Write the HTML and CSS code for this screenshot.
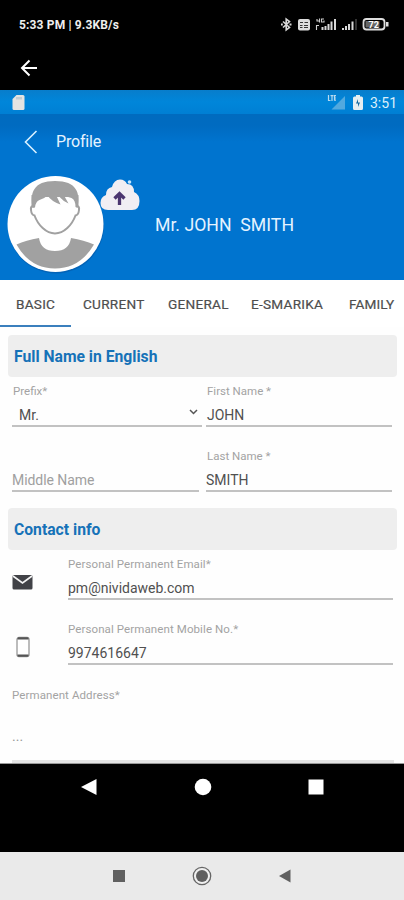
FILE: index.html
```html
<!DOCTYPE html>
<html lang="en">
<head>
<meta charset="utf-8">
<title>Profile</title>
<link rel="stylesheet" href="styles.css">
</head>
<body>
<div class="phone">
  <div class="status">
    <span class="status-text">5:33 PM | 9.3KB/s</span>
    <svg class="status-icons" width="112" height="16" viewBox="280 17 112 16">
      <path d="M283 21.500l6.500 6-3.300 2.500v-11l3.300 2.500-6.500 6" fill="none" stroke="#d8d8d8" stroke-width="1.600"/>
      <path d="M281 24.500h1.800M289.500 24.500h2" stroke="#d8d8d8" stroke-width="1.800"/>
      <rect x="298" y="19" width="12" height="11.500" rx="2" fill="#dcdcdc"/>
      <path d="M300 22.500h3M304.500 22.500h3.500M300 25.500h2.500M304 25.500h4M300 27.500h2.500M304 27.500h4" stroke="#333" stroke-width="1"/>
      <path d="M317 19v2h3M319.500 18.500v4M324 19h-2.500v3h2.500v-1.500M316.500 30v-4.500h2.500" fill="none" stroke="#ccc" stroke-width="1.100"/>
      <path d="M322.500 30v-3M325.500 30v-4M328.500 30v-6M331.500 30v-8.500M335 30v-11" stroke="#d8d8d8" stroke-width="2"/>
      <path d="M343 30v-2M346 30v-4M349 30v-6M352.500 30v-8.500" stroke="#d8d8d8" stroke-width="2"/>
      <path d="M356 30v-11" stroke="#333" stroke-width="2"/>
      <rect x="363.500" y="19" width="21" height="10.500" rx="3" fill="none" stroke="#dedede" stroke-width="1.800"/>
      <rect x="365.500" y="21" width="14" height="6.500" fill="#666"/>
      <path d="M386 22h2.500v4.500h-2.500z" fill="#dedede"/>
      <text x="368.500" y="28" class="battery-text">72</text>
    </svg>
  </div>
  <div class="topbar">
    <svg width="18" height="18" viewBox="0 0 18 18"><path d="M9.500 1.500L2 9l7.500 7.500M2 9h15" fill="none" stroke="#fff" stroke-width="2"/></svg>
  </div>
  <div class="inner-status">
    <svg class="sd" width="13" height="15" viewBox="0 0 13 15"><path d="M4.500 0H11q1.500 0 1.500 1.500v12q0 1.500-1.500 1.500H2Q.5 15 .5 13.500V4z" fill="#e4e4e2"/><path d="M5 2v2.500M7 2v2.500M9 2v2.500" stroke="#9fb6c4" stroke-width="1"/></svg>
    <svg class="lte" width="18" height="15" viewBox="0 0 18 15"><path d="M18 1v13.500H4.500z" fill="#52a9df"/><path d="M1.500 0v5.500h2M3.500.7h3M5 .7v5.300M9 .7H7.500v4.500H9M7.500 3H9" fill="none" stroke="#b7d9ef" stroke-width="1.200"/></svg>
    <svg class="charge" width="10" height="15" viewBox="0 0 10 15"><path d="M3 0h4v1.500h1.500Q10 1.500 10 3v10.500Q10 15 8.500 15h-7Q0 15 0 13.500V3q0-1.500 1.500-1.500H3z" fill="#e7eef1"/><path d="M5 4L3 8.500h2V12l2-4.500H5z" fill="#16699f"/></svg>
    <span>3:51</span>
  </div>
  <header class="header">
    <div class="title">
      <svg width="14" height="24" viewBox="0 0 14 24"><path d="M12.500 1L1.500 12l11 11" fill="none" stroke="#d8f0ff" stroke-width="1.600"/></svg>
      <h1>Profile</h1>
    </div>
    <div class="identity">
      <svg class="avatar" width="100" height="102" viewBox="6 174 100 102">
        <circle cx="56" cy="225.500" r="48" fill="#0559a6" opacity=".6"/>
        <circle cx="55.500" cy="224" r="48" fill="#fff"/>
        <path d="M16.500 244.500Q26 240 39 238q2 13 16 13 14 0 16-13 13 2 23 6.500-14 24-39 24t-38.500-24z" fill="#a1a1a1"/>
        <path d="M32.500 206q-2 1-1.500 4 .5 5 3.500 5.500C38 225 46 233.500 55 233.500S72 225 75.500 215.500q3-.5 3.500-5.500.5-3-1.500-4V196H32.500z" fill="#fff" stroke="#a1a1a1" stroke-width="2"/>
        <path d="M32.500 208C30 193 33 181 55 181s25.500 12 22.500 27l-2-1q0-7-4-9-3-1-7.500-2.500l4.500 8q-5-2-10-7.500h-2l4 8.500q-9-3-13-9-3 3-8 4.500-4 1.500-4.500 7.500z" fill="#a1a1a1"/>
      </svg>
      <svg class="cloud" width="40" height="34" viewBox="100 178 40 34">
        <path d="M108 210Q100.500 210 100.500 203q0-6 5.500-8 0-7 6-8 2-7.500 8-7.500 5 0 7 4.500 7 0 7 8 5.500 2.500 5.500 9 0 9-7.500 9z" fill="#f1eef3"/>
        <circle cx="129.500" cy="182" r="1.800" fill="#c5e7ff"/>
        <path d="M119.500 205v-11M114.500 198.500l5-5 5 5" fill="none" stroke="#4b356f" stroke-width="3.300"/>
      </svg>
      <span class="name">Mr. JOHN&nbsp; SMITH</span>
    </div>
  </header>
  <nav class="tabs">
    <span class="tab basic active">BASIC</span><span class="tab current">CURRENT</span><span class="tab general">GENERAL</span><span class="tab smarika">E-SMARIKA</span><span class="tab family">FAMILY</span>
  </nav>
  <main class="content">
    <h2 class="section">Full Name in English</h2>
    <div class="names">
      <div class="field prefix"><label>Prefix*</label><div class="value select"><span>Mr.</span><svg width="9" height="6" viewBox="0 0 9 6"><path d="M1 1l3.500 3.500L8 1" fill="none" stroke="#555" stroke-width="1.500"/></svg></div></div>
      <div class="field first"><label>First Name *</label><div class="value caps">JOHN</div></div>
      <div class="field middle"><label></label><div class="value placeholder">Middle Name</div></div>
      <div class="field last"><label>Last Name *</label><div class="value caps">SMITH</div></div>
    </div>
    <h2 class="section">Contact info</h2>
    <div class="contact-row">
      <svg width="22" height="22" viewBox="0 0 22 22"><rect x=".5" y="4" width="20" height="14.500" rx="1.500" fill="#414247"/><path d="M1 5l9.500 7L20 5" fill="none" stroke="#f4f4f4" stroke-width="1.700"/></svg>
      <div class="field"><label>Personal Permanent Email*</label><div class="value">pm@nividaweb.com</div></div>
    </div>
    <div class="contact-row">
      <svg width="22" height="22" viewBox="0 0 22 22"><rect x="5" y="1.500" width="12" height="19" rx="2" fill="#fff" stroke="#999" stroke-width="1.300"/><path d="M5.500 3.500V2.200q0-1 1.200-1h8.600q1.200 0 1.200 1v1.300zM5.500 18.500h11v1q0 1.200-1.200 1.200H6.700q-1.200 0-1.200-1.200z" fill="#555"/></svg>
      <div class="field"><label>Personal Permanent Mobile No.*</label><div class="value">9974616647</div></div>
    </div>
    <div class="address"><label>Permanent Address*</label><div class="dots">...</div></div>
  </main>
  <div class="nav-inner">
    <svg width="16" height="18" viewBox="0 0 16 18"><path d="M0 9L15.500 1v16z" fill="#fff"/></svg>
    <svg width="18" height="18" viewBox="0 0 18 18"><circle cx="9" cy="9" r="8.300" fill="#fff"/></svg>
    <svg width="16" height="18" viewBox="0 0 16 18"><rect x=".5" y="1.500" width="15" height="15" fill="#fff"/></svg>
  </div>
  <div class="nav-outer">
    <svg width="14" height="20" viewBox="0 0 14 20"><rect x="1" y="4" width="12" height="12" fill="#606060"/></svg>
    <svg width="20" height="20" viewBox="0 0 20 20"><circle cx="10" cy="10" r="8.700" fill="#f0f0f0" stroke="#666" stroke-width="1.300"/><circle cx="10" cy="10" r="6" fill="#606060"/></svg>
    <svg width="14" height="20" viewBox="0 0 14 20"><path d="M1 10l11.500-6.500v13z" fill="#606060"/></svg>
  </div>
</div>
</body>
</html>
```
FILE: styles.css
```css
* { box-sizing: border-box; }
body { margin: 0; font-family: Roboto, "Liberation Sans", sans-serif; background: #000; }
svg { display: block; flex: none; }
h1, h2 { margin: 0; }
.phone { width: 404px; height: 900px; display: flex; flex-direction: column; overflow: hidden; white-space: nowrap; }
.status { height: 50px; display: flex; align-items: center; justify-content: space-between; padding: 0 12px 0 19px; color: #eee; }
.status-text { font-size: 12px; font-weight: 700; letter-spacing: .15px; }
.battery-text { font-size: 9px; font-weight: 700; fill: #fff; }
.topbar { height: 40px; padding: 9px 0 0 20px; }
.inner-status { height: 24px; display: flex; align-items: center; padding: 1px 7px 0 12px; background: linear-gradient(#087dcb, #0086da 50%, #007fd4); color: #dceffa; font-size: 14px; }
.lte { margin-left: auto; }
.charge { margin: 0 7px 0 8px; }
.header { height: 166px; background: linear-gradient(#006bbf, #006bc1 12px, #0074cf 28px); color: #e5f3ff; }
.title { height: 60px; display: flex; align-items: center; gap: 18px; padding: 0 0 4px 24px; }
.title h1 { font-size: 16px; line-height: 24px; font-weight: 400; letter-spacing: -.2px; }
.identity { display: flex; align-items: flex-start; padding-left: 6px; }
.cloud { margin: 4px 0 0 -6px; }
.name { margin: 40px 0 0 15px; font-size: 17.7px; line-height: 22px; }
.tabs { height: 47px; display: flex; background: #fff; color: #4e4e4e; font-size: 13.6px; line-height: 48px; letter-spacing: .25px; -webkit-text-stroke: .2px; }
.basic { width: 71px; padding-left: 16px; border-bottom: 2px solid #3b7fbd; }
.current { width: 85px; padding-left: 12px; }
.general { width: 84px; padding-left: 12px; }
.smarika { width: 97px; padding-left: 11px; }
.family { padding-left: 12px; letter-spacing: .1px; }
.content { height: 437px; padding: 8px 7px 0 8px; display: flex; flex-direction: column; background: #fefefe; border-bottom: 1px solid #999; overflow: hidden; }
.section { flex: none; height: 42px; padding-left: 6px; border-radius: 4px; background: #eee; color: #1672b8; font-size: 15.7px; line-height: 43px; font-weight: 700; }
.names { flex: none; display: grid; grid-template-columns: 190px 186px; grid-template-rows: 65px 66px; column-gap: 4px; padding-left: 4px; }
.field { height: 50px; border-bottom: 2px solid #c2c2c2; }
.field label, .address label { display: block; height: 15px; margin-top: 7px; font-size: 11.5px; line-height: 15px; color: #a3a3a3; letter-spacing: .1px; }
.names label { letter-spacing: 0; padding-left: 1px; }
.value { height: 28px; padding-top: 6px; color: #505050; font-size: 14px; line-height: 20px; }
.names .middle { width: 187px; }
.names .first .value { padding-left: 1px; }
.select { display: flex; padding-left: 7px; justify-content: space-between; }
.select svg { margin: 4px 4px 0 0; }
.placeholder { color: #a0a0a0; letter-spacing: -.05px; }
.contact-row { flex: none; display: flex; height: 65px; padding-left: 4px; }
.contact-row > svg { margin: 21px 34px 0 0; }
.contact-row .field { width: 325px; }
.address { flex: none; height: 82px; margin: 1px -1px 0 4px; border-bottom: 3px solid #e4e4e4; }
.address { margin-right: 3px; }
.dots { padding-top: 23px; font-size: 14px; line-height: 20px; color: #999; }
.nav-inner { height: 88px; display: flex; justify-content: space-between; padding: 14px 80px 0 81px; background: #000; }
.nav-outer { height: 48px; display: flex; justify-content: space-between; padding: 14px 112px 0 112px; background: #eaeaea; }
```
